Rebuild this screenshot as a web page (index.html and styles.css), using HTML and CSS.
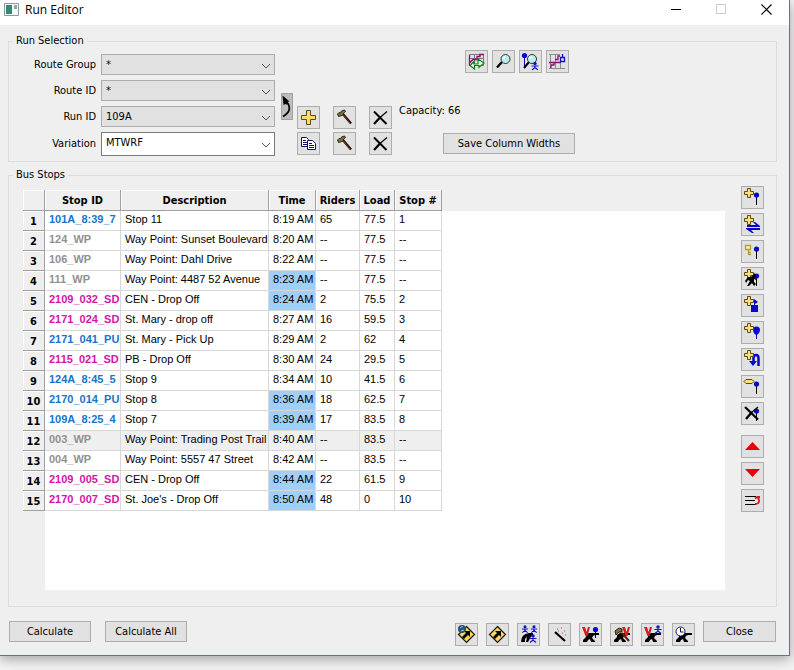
FILE: index.html
```html
<!DOCTYPE html>
<html lang="en">
<head>
  <meta charset="UTF-8">
  <title>Run Editor</title>
  <meta name="viewport" content="width=device-width, initial-scale=1">
  <link rel="stylesheet" href="styles.css">
</head>
<body>

  <!-- shared icon parts -->
  <svg class="sprite" aria-hidden="true">
    <symbol id="plus" viewBox="1 1 21 21"><path d="M6.500 2.500h3v3h3v3h-3v3h-3v-3h-3v-3h3z" fill="#ffe070" stroke="#5a4a18"/></symbol>
    <symbol id="pin" viewBox="1 1 21 21"><path d="M15.500 10v9" stroke="#000"/><circle cx="15.500" cy="9" r="2.600" fill="#0808c8"/></symbol>
    <symbol id="hammer" viewBox="1 1 21 21"><path d="M9.500 7.500l8.500 10" stroke="#1a0c08" stroke-width="2.400"/><path d="M10.500 9l7 8.500" stroke="#8a4030" stroke-width=".8"/><path d="M4.500 8l1.500-1.500 1.500.5 1-2 3-1 1 1.500-2 1.500-.5 2-2.500 1-2 .5z" fill="#77753a" stroke="#2c2c10"/></symbol>
    <symbol id="cross" viewBox="1 1 21 21"><path d="M5 5.500L17.500 18" stroke="#000" stroke-width="2"/><path d="M18 5.500l-7 6" stroke="#000" stroke-width="1.200"/><path d="M11.500 11L5 18" stroke="#000" stroke-width="2.200"/></symbol>
    <symbol id="road" viewBox="1 1 21 21"><path d="M4 19v-2l3-3v-2l3-2h5l5 0v2h-4l-2 1-1 2 3 3v1h-4l-1-3-2 1-1 2z" fill="#000"/></symbol>
    <symbol id="vee" viewBox="1 1 21 21"><path d="M3 4h3l1.500 5L9 4h2L8.500 13h-2z" fill="#d51a22"/></symbol>
    <symbol id="person" viewBox="0 0 8 9"><circle cx="4" cy="2" r="1.700" fill="#1111c4"/><path d="M0.500 4.500h7M4 4v2M1 8.500l3-2.500 3 2.500" fill="none" stroke="#1111c4" stroke-width="1.200"/></symbol>
    <symbol id="sign" viewBox="1 1 21 21"><path d="M11.500 3.500l8 8-8 8-8-8z" fill="#ffd45c" stroke="#111" stroke-width="1.200"/><path d="M7 14l4-4-2-2h6v6l-2-2-4 4z" fill="#000"/></symbol>
  </svg>

  <div class="window">
    <header class="titlebar">
      <svg class="app-icon" viewBox="0 0 15 13"><path d="M.5.5h14v12H.5z" fill="#f4f8f8" stroke="#8b9b9b"/><path d="M2 2h6v9H2z" fill="#3c8378"/><path d="M10 2h3v4h-3z" fill="#87aaa4"/></svg>
      <h1>Run Editor</h1>
      <div class="window-controls">
        <button aria-label="Minimize"><svg viewBox="0 0 11 11"><path d="M0 5.500h10" stroke="#000"/></svg></button>
        <button aria-label="Maximize" disabled><svg viewBox="0 0 11 11"><path d="M.5.5h9v9h-9z" fill="none" stroke="#ccc"/></svg></button>
        <button aria-label="Close window"><svg viewBox="0 0 11 11"><path d="M.5.5l10 10M10.500.5l-10 10" stroke="#000" stroke-width="1.200"/></svg></button>
      </div>
    </header>

    <main>
      <fieldset class="run-selection">
        <legend>Run Selection</legend>
        <div class="run-layout">
          <div class="run-form">
            <label for="routeGroup">Route Group</label>
            <div class="combo"><select id="routeGroup"><option>*</option></select><svg viewBox="0 0 10 6"><path d="M1 1l4 4 4-4"/></svg></div>
            <label for="routeId">Route ID</label>
            <div class="combo"><select id="routeId"><option>*</option></select><svg viewBox="0 0 10 6"><path d="M1 1l4 4 4-4"/></svg></div>
            <label for="runId">Run ID</label>
            <div class="combo"><select id="runId"><option>109A</option></select><svg viewBox="0 0 10 6"><path d="M1 1l4 4 4-4"/></svg></div>
            <label for="variation">Variation</label>
            <div class="combo editable"><select id="variation"><option>MTWRF</option></select><svg viewBox="0 0 10 6"><path d="M1 1l4 4 4-4"/></svg></div>
          </div>

          <button class="link-button" aria-label="Copy up"><svg viewBox="1 1 10 25"><path d="M1.500 2.500l7 6-3 .5 1 3-2-1-2 1z" fill="#000"/><path d="M5 8q8 9-3 15.500" fill="none" stroke="#000" stroke-width="1.800"/></svg></button>

          <div class="run-tools">
            <button class="icon" aria-label="Add run"><svg viewBox="1 1 21 21"><path d="M9.500 4.500h4v5h5v4h-5v5h-4v-5h-5v-4h5z" fill="#ffdc62" stroke="#5a4a18"/></svg></button>
            <button class="icon" aria-label="Edit run"><svg><use href="#hammer"/></svg></button>
            <button class="icon" aria-label="Delete run"><svg><use href="#cross"/></svg></button>
            <button class="icon" aria-label="Copy variation"><svg viewBox="1 1 21 21"><g fill="#fff" stroke="#11116a"><path d="M4.500 5.500h5l2 2v7h-7z"/><path d="M6 8.500h3M6 10.500h4M6 12.500h4"/><path d="M10.500 8.500h5l3 3v6h-8z"/><path d="M12 11.500h3M12 13.500h5M12 15.500h5"/></g></svg></button>
            <button class="icon" aria-label="Edit variation"><svg><use href="#hammer"/></svg></button>
            <button class="icon" aria-label="Delete variation"><svg><use href="#cross"/></svg></button>
          </div>

          <div class="run-side">
            <div class="map-tools">
              <button class="icon" aria-label="Refresh map"><svg viewBox="1 1 21 21"><path d="M4.500 4.500h14v11h-14zM4 8.500h14M9.500 4v12" fill="none" stroke="#777"/><path d="M4.500 16V5M4 13.500l4-4h4l0-3h3V4M14 4.500h5" fill="none" stroke="#86107c" stroke-width="1.300"/><path d="M5 15.500l4-4v2.500h4v-5l6 4-5 4.500v-2H9.500V19z" fill="#eaffea" stroke="#188018" stroke-width="1.200"/></svg></button>
              <button class="icon" aria-label="Zoom to run"><svg viewBox="1 1 21 21"><path d="M10 12l-5 5.500" stroke="#000" stroke-width="2.400"/><circle cx="13.500" cy="9" r="4.500" fill="#b8eeee" stroke="#333"/><path d="M11.500 9q0-2 2-2.500" stroke="#fff" stroke-width="1.800" fill="none"/></svg></button>
              <button class="icon" aria-label="Find stop or student"><svg viewBox="1 1 21 21"><path d="M5.500 6v11" stroke="#0808b8"/><circle cx="5.500" cy="5.500" r="2.600" fill="#0808c8"/><path d="M10 12l-5 6" stroke="#000" stroke-width="2"/><circle cx="13" cy="9" r="4.500" fill="#b8eeee" stroke="#333"/><path d="M11 9q0-2 2-2.500" stroke="#fff" stroke-width="1.500" fill="none"/><use href="#person" x="12" y="11.500" width="8" height="9"/></svg></button>
              <button class="icon" aria-label="Show on map"><svg viewBox="1 1 21 21"><path d="M4.500 4v15M9.500 4v15M3 4.500h11M3 18.500h16M14.500 12v7" stroke="#8b8b8b"/><path d="M3 12.500h12M5 18v-3h3v-2M9 9.500h3V6h2" fill="none" stroke="#86107c" stroke-width="1.300"/><path d="M14.500 7.500h4v4h-4zM16.500 4v3" fill="none" stroke="#1111c4" stroke-width="1.300"/></svg></button>
            </div>
            <span class="capacity">Capacity: 66</span>
            <button class="push save">Save Column Widths</button>
          </div>
        </div>
      </fieldset>

      <fieldset class="bus-stops">
        <legend>Bus Stops</legend>
        <div class="stops-layout">
          <div class="table-view">
            <table>
              <colgroup>
                <col class="c-num"><col class="c-id"><col class="c-desc"><col class="c-time"><col class="c-riders"><col class="c-load"><col class="c-stop">
              </colgroup>
              <thead>
                <tr><th></th><th>Stop ID</th><th>Description</th><th>Time</th><th>Riders</th><th>Load</th><th>Stop #</th></tr>
              </thead>
              <tbody>
                <tr><th>1</th><td class="pickup">101A_8:39_7</td><td>Stop 11</td><td>8:19 AM</td><td>65</td><td>77.5</td><td>1</td></tr>
                <tr><th>2</th><td class="waypoint">124_WP</td><td>Way Point: Sunset Boulevard</td><td>8:20 AM</td><td>--</td><td>77.5</td><td>--</td></tr>
                <tr><th>3</th><td class="waypoint">106_WP</td><td>Way Point: Dahl Drive</td><td>8:22 AM</td><td>--</td><td>77.5</td><td>--</td></tr>
                <tr><th>4</th><td class="waypoint">111_WP</td><td>Way Point: 4487 52 Avenue</td><td class="fixed">8:23 AM</td><td>--</td><td>77.5</td><td>--</td></tr>
                <tr><th>5</th><td class="dropoff">2109_032_SD</td><td>CEN - Drop Off</td><td class="fixed">8:24 AM</td><td>2</td><td>75.5</td><td>2</td></tr>
                <tr><th>6</th><td class="dropoff">2171_024_SD</td><td>St. Mary - drop off</td><td>8:27 AM</td><td>16</td><td>59.5</td><td>3</td></tr>
                <tr><th>7</th><td class="pickup">2171_041_PU</td><td>St. Mary - Pick Up</td><td>8:29 AM</td><td>2</td><td>62</td><td>4</td></tr>
                <tr><th>8</th><td class="dropoff">2115_021_SD</td><td>PB - Drop Off</td><td>8:30 AM</td><td>24</td><td>29.5</td><td>5</td></tr>
                <tr><th>9</th><td class="pickup">124A_8:45_5</td><td>Stop 9</td><td>8:34 AM</td><td>10</td><td>41.5</td><td>6</td></tr>
                <tr><th>10</th><td class="pickup">2170_014_PU</td><td>Stop 8</td><td class="fixed">8:36 AM</td><td>18</td><td>62.5</td><td>7</td></tr>
                <tr><th>11</th><td class="pickup">109A_8:25_4</td><td>Stop 7</td><td class="fixed">8:39 AM</td><td>17</td><td>83.5</td><td>8</td></tr>
                <tr class="current"><th>12</th><td class="waypoint">003_WP</td><td>Way Point: Trading Post Trail</td><td>8:40 AM</td><td>--</td><td>83.5</td><td>--</td></tr>
                <tr><th>13</th><td class="waypoint">004_WP</td><td>Way Point: 5557 47 Street</td><td>8:42 AM</td><td>--</td><td>83.5</td><td>--</td></tr>
                <tr><th>14</th><td class="dropoff">2109_005_SD</td><td>CEN - Drop Off</td><td class="fixed">8:44 AM</td><td>22</td><td>61.5</td><td>9</td></tr>
                <tr><th>15</th><td class="dropoff">2170_007_SD</td><td>St. Joe's - Drop Off</td><td class="fixed">8:50 AM</td><td>48</td><td>0</td><td>10</td></tr>
              </tbody>
            </table>
          </div>

          <div class="stop-tools">
            <div class="tool-group">
              <button class="icon" aria-label="Add stop"><svg><use href="#plus"/><use href="#pin"/></svg></button>
              <button class="icon" aria-label="Add transfer"><svg viewBox="1 1 21 21"><path d="M6 12h9l-3-3h2l5 4v1H6zM19 15v2H10l3 3h-2l-6-4v-1z" fill="#0808c8"/><use href="#plus" x="1" y="1" width="21" height="21"/></svg></button>
              <button class="icon" aria-label="Add keyed stop"><svg viewBox="1 1 21 21"><path d="M4.500 5.500h5v4h-5zM7.500 10v5M8 12.500h2M8 14.500h2" fill="#fff3a5" stroke="#b39a46" stroke-width="1.300"/><use href="#pin" x="1" y="1" width="21" height="21"/></svg></button>
              <button class="icon" aria-label="Add stop by path"><svg viewBox="1 1 21 21"><use href="#pin" x="1" y="1" width="21" height="21"/><use href="#plus" x="1" y="1" width="21" height="21"/><path d="M14 6l1 7-2-1v3l2 2-2 2-2-3-3 3-2 0 3-5-2-1-2 3-1-2 3-4 3 0z" fill="#000"/></svg></button>
              <button class="icon" aria-label="Add school"><svg viewBox="1 1 21 21"><path d="M10 11h7v7h-7zM13 12V5l4 3-3 2v2z" fill="#0808c8"/><use href="#plus" x="1" y="1" width="21" height="21"/></svg></button>
              <button class="icon" aria-label="Add way point"><svg viewBox="1 1 21 21"><path d="M12 9q0-3.500 3.500-3.500T19 9q0 3-3 5v4h-1v-4q-3-2-3-5z" fill="#0808c8"/><use href="#plus" x="1" y="1" width="21" height="21"/></svg></button>
              <button class="icon" aria-label="Add turnaround"><svg viewBox="1 1 21 21"><path d="M17.500 18V10q0-3-2.500-3t-2.500 3v4" fill="none" stroke="#0808c8" stroke-width="2.500"/><path d="M8 13h8l-4 5z" fill="#0808c8"/><use href="#plus" x="1" y="1" width="21" height="21"/></svg></button>
              <button class="icon" aria-label="Rename stop"><svg viewBox="1 1 21 21"><path d="M5 4.500h6l2 2-2 2H5l-2-2z" fill="#ffe070" stroke="#5a4a18"/><use href="#pin" x="1" y="1" width="21" height="21"/></svg></button>
              <button class="icon" aria-label="Remove stop"><svg viewBox="1 1 21 21"><use href="#pin" x="1" y="1" width="21" height="21"/><path d="M4 5l13 12.500" stroke="#000" stroke-width="2.200"/><path d="M17 5l-7 6" stroke="#000" stroke-width="1.200"/><path d="M11 10l-6 7" stroke="#000" stroke-width="2.400"/></svg></button>
            </div>
            <div class="tool-group">
              <button class="icon" aria-label="Move up"><svg viewBox="1 1 21 21"><path d="M11.500 7l7.500 8H4z" fill="#e80000"/></svg></button>
              <button class="icon" aria-label="Move down"><svg viewBox="1 1 21 21"><path d="M4 7h15l-7.500 8z" fill="#e80000"/></svg></button>
              <button class="icon" aria-label="Reorder"><svg viewBox="1 1 21 21"><path d="M4 7.500h11M4 11.500h10M4 15.500h11" stroke="#000"/><path d="M14 15q4.500 0 4-3.500T16 9M14 9.500l3-2M16 8h3" fill="none" stroke="#d51a22" stroke-width="1.800"/></svg></button>
            </div>
          </div>
        </div>
      </fieldset>

      <footer>
        <button class="push calc">Calculate</button>
        <button class="push calc">Calculate All</button>
        <div class="run-actions">
          <button class="icon" aria-label="Directions on globe"><svg viewBox="1 1 21 21"><use href="#sign" x="1" y="1" width="21" height="21"/><circle cx="7" cy="6" r="4" fill="#24507c"/><path d="M5 5q2-2 3-1M6 8l3-1" stroke="#9cc8e4" fill="none"/></svg></button>
          <button class="icon" aria-label="Directions"><svg><use href="#sign"/></svg></button>
          <button class="icon" aria-label="Assign students"><svg viewBox="1 1 21 21"><path d="M4 19q0-8 8-9h4v2h-1l-4 7H9l1-5-2 2v3z" fill="#000"/><use href="#person" x="4" y="2" width="8" height="8"/><use href="#person" x="13" y="2" width="8" height="8"/><use href="#person" x="12" y="11" width="8" height="9"/></svg></button>
          <button class="icon" aria-label="Optimize"><svg viewBox="1 1 21 21"><path d="M7 9l10 9" stroke="#000" stroke-width="2.200"/><path d="M9 6h1M13 5h1M16 8h1M14 10h1M10 8h1M17 12h1" stroke="#b34a40"/></svg></button>
          <button class="icon" aria-label="Verify stops"><svg viewBox="1 1 21 21"><use href="#road" x="1" y="1" width="21" height="21"/><use href="#vee" x="1" y="1" width="21" height="21"/><path d="M16.500 6v9" stroke="#000"/><circle cx="16.500" cy="6.500" r="2.600" fill="#0808c8"/></svg></button>
          <button class="icon" aria-label="Verify route"><svg viewBox="1 1 21 21"><use href="#road" x="1" y="1" width="21" height="21"/><path d="M5 8l4-3 3 1 0 3-3 0-3 3z" fill="#77753a" stroke="#222208"/><path d="M12 10l7 8" stroke="#6a1c14" stroke-width="2"/><use href="#vee" x="10" y="1" width="21" height="21"/></svg></button>
          <button class="icon" aria-label="Verify students"><svg viewBox="1 1 21 21"><use href="#road" x="1" y="1" width="21" height="21"/><use href="#vee" x="1" y="1" width="21" height="21"/><use href="#person" x="13" y="2" width="8" height="9"/></svg></button>
          <button class="icon" aria-label="Timing"><svg viewBox="1 1 21 21"><use href="#road" x="1" y="1" width="21" height="21"/><circle cx="8.500" cy="8.500" r="4.500" fill="#fff" stroke="#1111a4"/><path d="M8.500 5v4h3" fill="none" stroke="#111"/></svg></button>
        </div>
        <button class="push close">Close</button>
      </footer>
    </main>
  </div>

</body>
</html>
```
FILE: styles.css
```css
* {
  box-sizing: border-box;
}

body {
  margin: 0;
  padding: 0 4px 14px 0;
  background: #f3f3f3;
  font-family: "DejaVu Sans Condensed", "DejaVu Sans", sans-serif;
  font-size: 11px;
  line-height: 14px;
  color: #000;
  overflow: hidden;
}

button,
select {
  font: inherit;
  color: inherit;
}

.sprite {
  position: absolute;
  width: 0;
  height: 0;
}

.window {
  background: #efefef;
  border-right: 1px solid #2f87ae;
  border-bottom: 1px solid #2f87ae;
  box-shadow: 0 3px 12px rgba(0, 0, 0, 0.35);
}

/* title bar */
.titlebar {
  display: flex;
  align-items: center;
  height: 25px;
  padding: 0 17px 6px 4px;
  background: #fff;
}

.app-icon {
  width: 15px;
  height: 13px;
}

.titlebar h1 {
  margin: 0 auto 0 6px;
  font: 12px/18px "Open Sans", "Noto Sans", sans-serif;
}

.window-controls {
  display: flex;
  gap: 34px;
}

.window-controls button {
  display: flex;
  padding: 0;
  border: 0;
  background: none;
}

.window-controls svg {
  width: 11px;
  height: 11px;
}

main {
  padding: 9px 12px 9px 8px;
}

fieldset {
  min-width: 0;
  margin: 0;
  border: 1px solid #dcdcdc;
}

legend {
  margin-left: 4px;
  padding: 0 3px;
}

/* run selection */
.run-selection {
  padding: 2px 6px 5px 0;
}

.bus-stops {
  margin-top: 6px;
  padding: 4px 12px 16px 0;
}

.run-layout {
  display: flex;
}

.run-form {
  display: grid;
  grid-template-columns: 87px 174px;
  gap: 5px;
  align-items: center;
  padding-top: 4px;
}

.run-form label {
  text-align: right;
}

.combo {
  position: relative;
  display: flex;
}

.combo select {
  appearance: none;
  width: 100%;
  height: 21px;
  padding: 0 20px 0 4px;
  border: 1px solid #adadad;
  border-radius: 0;
  background: #e1e1e1;
}

.combo.editable select {
  height: 24px;
  padding-bottom: 3px;
  border-color: #7a7a7a;
  background: #fff;
}

.combo svg {
  position: absolute;
  right: 4px;
  top: 50%;
  width: 10px;
  height: 6px;
  margin-top: -2px;
  fill: none;
  stroke: #555;
  pointer-events: none;
}

.link-button {
  width: 12px;
  height: 27px;
  margin: 43px 4px 0 6px;
  padding: 0;
  border: 1px solid #a0a0a0;
  background: #bdbdbd;
}

.link-button svg {
  display: block;
  width: 10px;
  height: 25px;
}

.icon {
  width: 23px;
  height: 23px;
  padding: 0;
  border: 1px solid #adadad;
  background: #e1e1e1;
}

.icon svg {
  display: block;
  width: 21px;
  height: 21px;
}

.run-tools {
  display: grid;
  grid-template-columns: repeat(3, 23px);
  gap: 3px 13px;
  align-content: end;
  padding-bottom: 1px;
}

.run-side {
  display: flex;
  flex-direction: column;
  align-items: flex-start;
  width: 176px;
  margin-left: 7px;
}

.map-tools {
  display: flex;
  gap: 4px;
  align-self: flex-end;
  margin-right: 6px;
}

.capacity {
  margin-top: 31px;
}

.push {
  height: 21px;
  padding: 0;
  border: 1px solid #adadad;
  background: #e1e1e1;
}

.save {
  width: 132px;
  margin: auto 0 2px auto;
}

/* stops table */
.stops-layout {
  display: flex;
  gap: 16px;
  padding-left: 14px;
}

.table-view {
  flex: 1;
  height: 400px;
  margin-top: 4px;
  background: linear-gradient(#fff, #fff) 22px 21px no-repeat;
}

table {
  width: 419px;
  table-layout: fixed;
  border-spacing: 0;
  font-family: "Liberation Sans", Arial, sans-serif;
}

.c-num { width: 22px; }
.c-id { width: 76px; }
.c-desc { width: 148px; }
.c-time { width: 47px; }
.c-riders { width: 44px; }
.c-load { width: 35px; }
.c-stop { width: 47px; }

th,
td {
  height: 20px;
  padding: 0 0 3px 4px;
  line-height: 14px;
  white-space: nowrap;
  text-align: left;
  border-right: 1px solid #d8d8d8;
  border-bottom: 1px solid #d8d8d8;
}

th {
  padding: 2px 0 0;
  font-family: "DejaVu Sans Condensed", "DejaVu Sans", sans-serif;
  font-weight: bold;
  text-align: center;
  background: #efefef;
  border-right-color: #a0a0a0;
  border-bottom-color: #a0a0a0;
  box-shadow: inset 1px 1px #fff;
}

thead th {
  height: 21px;
}

.pickup,
.dropoff,
.waypoint {
  font-weight: bold;
}

.pickup { color: #1874cd; }
.dropoff { color: #d414a8; }
.waypoint { color: #919191; }

.fixed {
  background: #a0cffa;
}

.current td {
  background: #efefef;
}

.current .fixed {
  background: #a0cffa;
}

.stop-tools,
.tool-group {
  display: flex;
  flex-direction: column;
  gap: 4px;
}

.stop-tools {
  gap: 10px;
}

/* bottom bar */
footer {
  display: flex;
  align-items: flex-start;
  margin-top: 14px;
  padding: 0 1px;
}

.calc {
  width: 82px;
  margin-right: 14px;
}

.run-actions {
  display: flex;
  gap: 8px;
  margin: 2px 8px 0 auto;
}

.close {
  width: 73px;
}
```
